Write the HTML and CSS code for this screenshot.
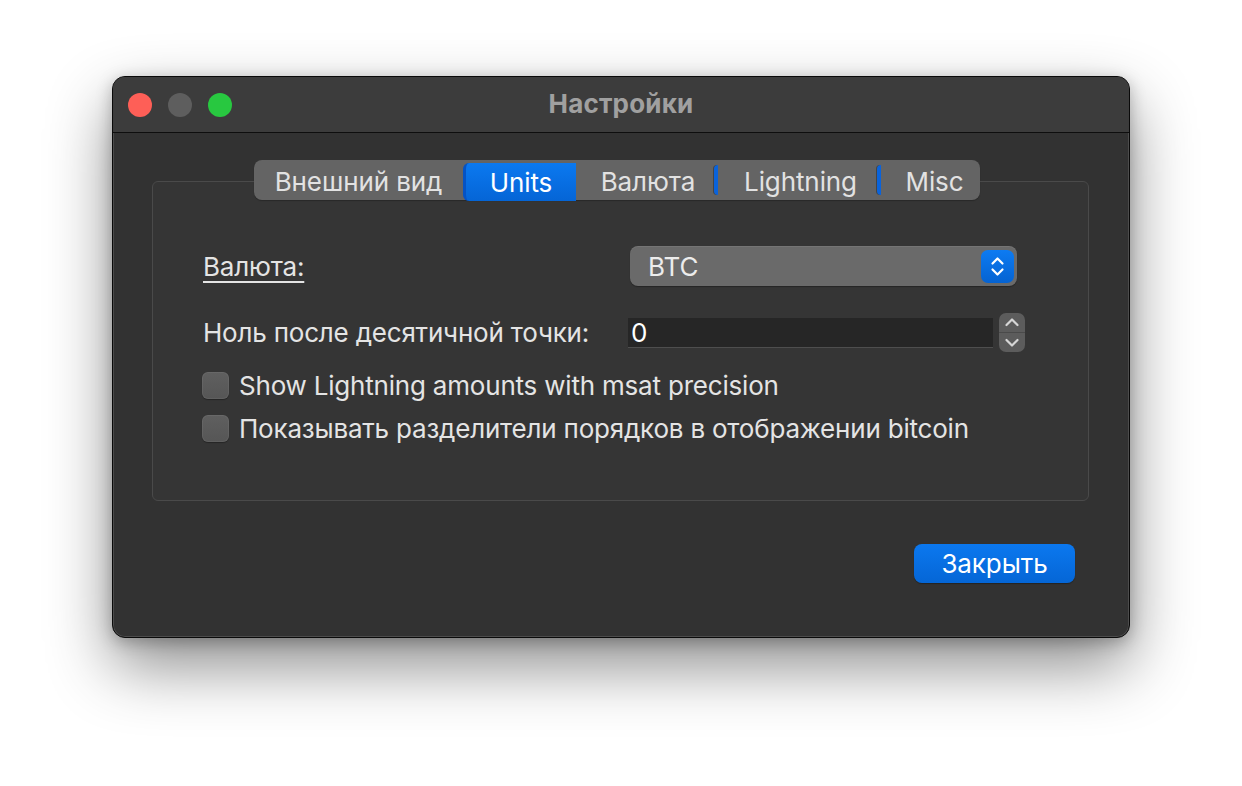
FILE: index.html
```html
<!DOCTYPE html>
<html lang="ru">
<head>
<meta charset="utf-8">
<title>Настройки</title>
<link rel="stylesheet" href="styles.css">
</head>
<body>
<div class="window">
  <div class="titlebar">
    <div class="lights">
      <span class="light red"></span>
      <span class="light gray"></span>
      <span class="light green"></span>
    </div>
    <div class="title">Настройки</div>
    <div class="spacer"></div>
  </div>
  <div class="content">
    <div class="tabs-row">
      <div class="tabs">
        <div class="tab tab-look">Внешний вид</div>
        <div class="tab tab-units selected">Units</div>
        <div class="tab tab-cur">Валюта</div>
        <span class="sep"></span>
        <div class="tab tab-ln">Lightning</div>
        <span class="sep"></span>
        <div class="tab tab-misc">Misc</div>
      </div>
    </div>
    <div class="group">
      <div class="row row-currency">
        <div class="label"><u>Валюта:</u></div>
        <div class="combo">
          <span class="combo-text">BTC</span>
          <span class="combo-btn">
            <svg width="33" height="33" viewBox="0 0 33 33">
              <path d="M11.5 13.5 L16.5 8.5 L21.5 13.5" fill="none" stroke="#fff" stroke-width="2.2" stroke-linecap="round" stroke-linejoin="round"/>
              <path d="M11.5 19.5 L16.5 24.5 L21.5 19.5" fill="none" stroke="#fff" stroke-width="2.2" stroke-linecap="round" stroke-linejoin="round"/>
            </svg>
          </span>
        </div>
      </div>
      <div class="row row-zero">
        <div class="label">Ноль после десятичной точки:</div>
        <div class="spin">
          <div class="spin-input">0</div>
          <div class="stepper">
            <span class="step step-up">
              <svg width="26" height="19" viewBox="0 0 26 19">
                <path d="M7.5 12 L13 6.5 L18.5 12" fill="none" stroke="#d6d6d6" stroke-width="2.2" stroke-linecap="round" stroke-linejoin="round"/>
              </svg>
            </span>
            <span class="step step-down">
              <svg width="26" height="19" viewBox="0 0 26 19">
                <path d="M7.5 7 L13 12.5 L18.5 7" fill="none" stroke="#d6d6d6" stroke-width="2.2" stroke-linecap="round" stroke-linejoin="round"/>
              </svg>
            </span>
          </div>
        </div>
      </div>
      <label class="check check-first">
        <span class="box"></span>
        <span class="check-text">Show Lightning amounts with msat precision</span>
      </label>
      <label class="check check-second">
        <span class="box"></span>
        <span class="check-text">Показывать разделители порядков в отображении bitcoin</span>
      </label>
    </div>
    <div class="actions">
      <button class="primary">Закрыть</button>
    </div>
  </div>
</div>
</body>
</html>
```

FILE: styles.css
```css
* {
  box-sizing: border-box;
}

html, body {
  margin: 0;
  padding: 0;
  background: #ffffff;
}

body {
  font-family: "Inter", "Liberation Sans", "Noto Sans", sans-serif;
  padding-top: 76px;
  padding-left: 112px;
  height: 786px;
  overflow: hidden;
}

.window {
  width: 1018px;
  height: 562px;
  background: #323232;
  border: 1px solid #0a0a0a;
  border-radius: 13px;
  box-shadow: inset 0 0 0 1px rgba(255, 255, 255, 0.13),
              0 28px 64px rgba(0, 0, 0, 0.45),
              0 4px 16px rgba(0, 0, 0, 0.25);
  overflow: hidden;
  display: flex;
  flex-direction: column;
}

.titlebar {
  height: 56px;
  background: #3c3c3c;
  border-bottom: 1px solid #0e0e0e;
  display: grid;
  grid-template-columns: 1fr auto 1fr;
  align-items: center;
  flex: none;
}

.lights {
  display: flex;
  gap: 16px;
  padding-left: 15px;
  padding-top: 1px;
}

.light {
  width: 24px;
  height: 24px;
  border-radius: 50%;
  display: block;
}

.light.red { background: #fe5f57; }
.light.gray { background: #5e5e5e; }
.light.green { background: #28c840; }

.title {
  font-weight: 700;
  font-size: 26px;
  color: #a0a0a0;
  letter-spacing: 0.2px;
  margin-top: -2px;
}

.content {
  flex: 1;
  display: flex;
  flex-direction: column;
}

.tabs-row {
  display: flex;
  justify-content: flex-start;
  padding-left: 141px;
  margin-top: 27px;
  margin-bottom: -19px;
  position: relative;
  z-index: 1;
}

.tabs {
  display: flex;
  align-items: stretch;
  height: 40px;
  background: #646464;
  border-radius: 8px;
  box-shadow: 0 1px 1px rgba(0, 0, 0, 0.25);
}

.tab {
  font-size: 26px;
  color: #e2e2e2;
  display: flex;
  align-items: center;
  justify-content: center;
  letter-spacing: -0.1px;
  padding-top: 3px;
}

.tab-look { width: 209px; }
.tab-units { width: 113px; }
.tab-cur { width: 138px; padding-left: 6px; }
.tab-ln { width: 159px; padding-left: 6px; }
.tab-misc { width: 99px; padding-left: 8px; }

.tab.selected {
  background: linear-gradient(#0b79f0, #0565d6);
  color: #ffffff;
  border-radius: 6px 0 0 6px;
  margin-top: 3px;
  margin-bottom: -1px;
  border-left: 3px solid #0553c4;
  padding-top: 0;
}

.sep {
  width: 4px;
  margin: 5px 0;
  background: #0a63db;
  border-radius: 4px 0 0 4px;
  box-shadow: -1px 0 0 #454545;
}

.group {
  margin: 0 40px 0 39px;
  height: 320px;
  background: #353535;
  border: 1px solid #4a4a4a;
  border-radius: 6px;
  padding: 64px 0 0 50px;
  display: flex;
  flex-direction: column;
}

.row {
  display: flex;
  align-items: center;
}

.label {
  width: 425px;
  font-size: 26px;
  color: #e4e4e4;
  letter-spacing: -0.2px;
}

.label u {
  text-underline-offset: 5px;
  text-decoration-thickness: 2px;
}

.row-currency {
  height: 40px;
}

.combo {
  margin-left: 2px;
  width: 387px;
  height: 40px;
  background: #6a6a6a;
  border-radius: 8px;
  box-shadow: inset 0 1px 0 rgba(255, 255, 255, 0.08), 0 1px 1px rgba(0, 0, 0, 0.3);
  display: flex;
  align-items: center;
  justify-content: space-between;
  padding: 0 3px 0 18px;
}

.combo-text {
  font-size: 26px;
  color: #ececec;
}

.combo-btn {
  width: 33px;
  height: 33px;
  border-radius: 7px;
  background: linear-gradient(#0d7bf2, #0563d2);
  display: block;
}

.combo-btn svg {
  display: block;
}

.row-zero {
  margin-top: 27px;
  height: 39px;
}

.spin {
  display: flex;
  align-items: center;
  gap: 6px;
}

.spin-input {
  width: 365px;
  height: 30px;
  background: #262626;
  border-bottom: 1px solid #4e4e4e;
  font-size: 26px;
  color: #ffffff;
  display: flex;
  align-items: center;
  padding-left: 3px;
}

.stepper {
  width: 26px;
  height: 39px;
  background: #5c5c5c;
  border-radius: 7px;
  display: flex;
  flex-direction: column;
  overflow: hidden;
}

.step {
  flex: 1;
  display: block;
}

.step svg {
  display: block;
}

.step-up {
  border-bottom: 1px solid #4a4a4a;
}

.check {
  display: flex;
  align-items: center;
  gap: 10px;
  height: 27px;
  margin-left: -1px;
}

.check-first {
  margin-top: 20px;
}

.check-second {
  margin-top: 16px;
}

.box {
  width: 27px;
  height: 27px;
  border-radius: 6px;
  background: linear-gradient(#5f5f5f, #565656);
  box-shadow: inset 0 0 0 1px rgba(255, 255, 255, 0.06), 0 1px 1px rgba(0, 0, 0, 0.3);
  flex: none;
}

.check-text {
  font-size: 26px;
  color: #e4e4e4;
  letter-spacing: -0.2px;
}

.actions {
  display: flex;
  justify-content: flex-end;
  padding-right: 54px;
  margin-top: 43px;
}

.primary {
  width: 161px;
  height: 39px;
  border: none;
  border-radius: 8px;
  background: linear-gradient(#0b78ef, #0566d6);
  color: #ffffff;
  font-family: inherit;
  font-size: 26px;
  letter-spacing: -0.1px;
  box-shadow: 0 1px 1px rgba(0, 0, 0, 0.3);
  padding: 0;
}
```
